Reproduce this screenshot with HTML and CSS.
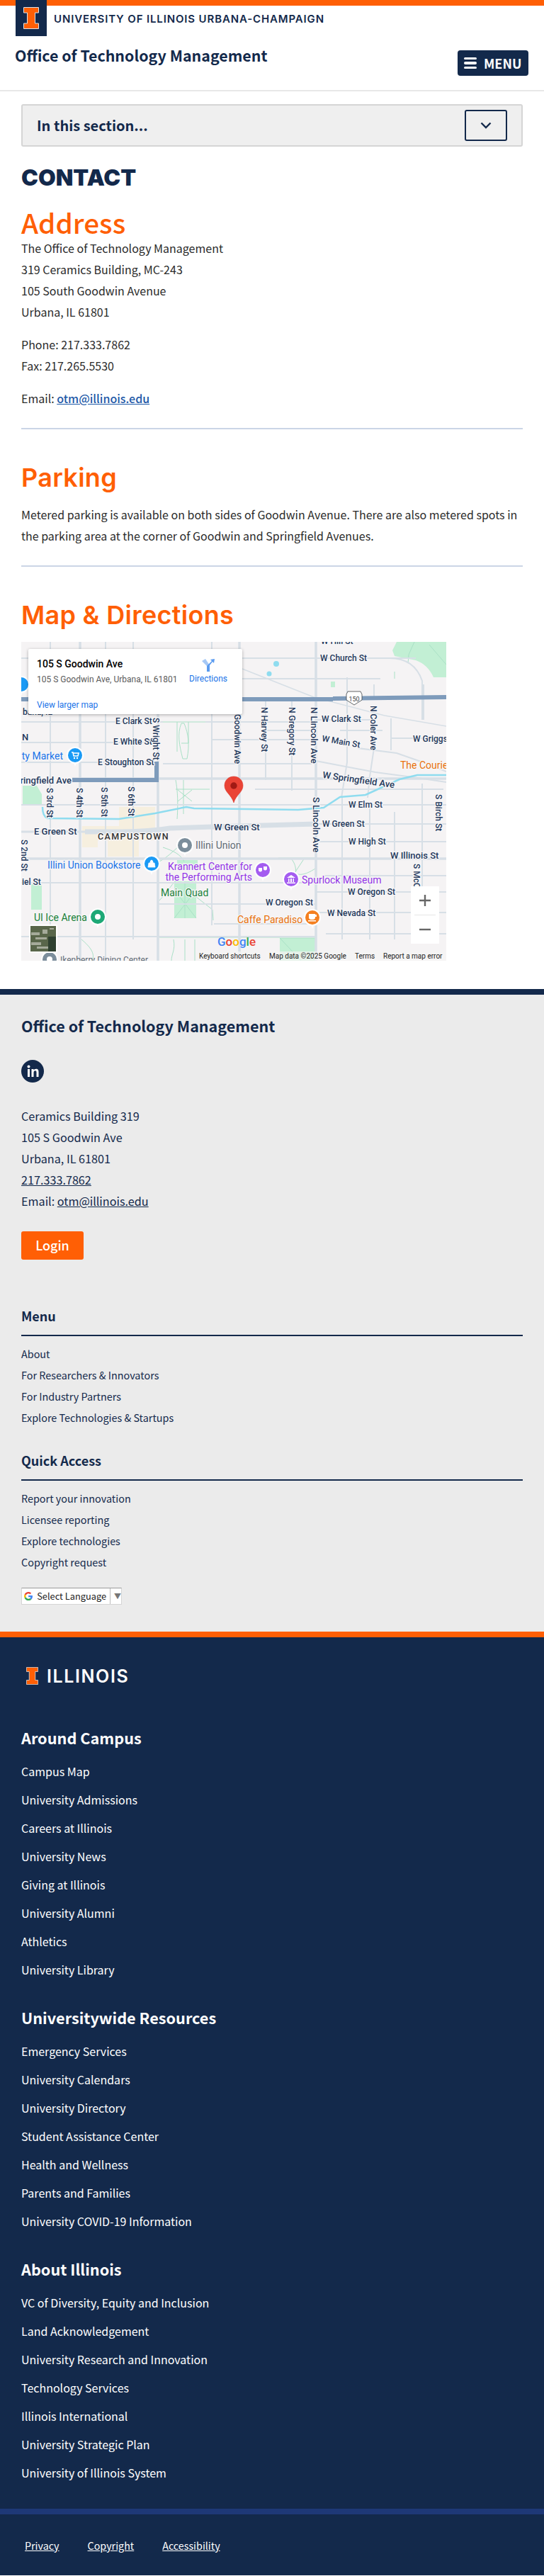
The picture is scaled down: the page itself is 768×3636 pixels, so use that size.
FILE: index.html
```html
<!doctype html>
<html>
<head>
<meta charset="utf-8">
<meta name="viewport" content="width=device-width,initial-scale=1.0">
<title>Contact - Office of Technology Management</title>
<link rel="stylesheet" href="styles.css">
</head>
<body>

<svg class="defs" width="0" height="0">
    <defs>
        <g id="block-i">
            <path d="M.5.5h21v7.5h-5v15h5v7.5H.5V23h5V8h-5z" fill="#ff5f05" stroke="#dfe3e8" stroke-width="1"/>
        </g>
        <g id="poi">
            <path d="M-8-7 0 16 8-7z" fill="#fff"/>
            <circle r="12" fill="#fff"/>
        </g>
    </defs>
</svg>

<header class="site-header">
    <div class="brand-bar">
        <a class="block-i"><svg width="22" height="31" viewBox="0 0 22 31"><use href="#block-i"/></svg></a>
        <span class="wordmark">UNIVERSITY OF ILLINOIS URBANA-CHAMPAIGN</span>
    </div>
    <div class="site-row">
        <a class="site-name">Office of Technology Management</a>
        <button class="menu-btn"><span class="burger"><i></i><i></i><i></i></span>MENU</button>
    </div>
</header>

<main class="content">
    <div class="section-nav">
        <span>In this section...</span>
        <button class="section-toggle">
            <svg width="16" height="10" viewBox="0 0 16 10"><path d="M1.5 1.5 8 8l6.5-6.5" fill="none" stroke="#13294b" stroke-width="2.4"/></svg>
        </button>
    </div>

    <h1 class="page-title">CONTACT</h1>

    <h2 class="h-address">Address</h2>
    <p class="lines">The Office of Technology Management<br>319 Ceramics Building, MC-243<br>105 South Goodwin Avenue<br>Urbana, IL 61801</p>
    <p class="lines">Phone: 217.333.7862<br>Fax: 217.265.5530</p>
    <p class="lines">Email: <a class="mail">otm@illinois.edu</a></p>
    <hr class="rule">

    <h2 class="h-mont">Parking</h2>
    <p class="lines parking">Metered parking is available on both sides of Goodwin Avenue. There are also metered spots in the parking area at the corner of Goodwin and Springfield Avenues.</p>
    <hr class="rule rule-2">

    <h2 class="h-mont">Map &amp; Directions</h2>

    <div class="map">
        <svg class="map-svg" width="600" height="450" viewBox="0 0 600 450">
            <rect width="600" height="450" fill="#f5f3f4"/>

            <!-- green + campus areas -->
            <g fill="#c2efd4">
                <path d="M530 0h70v50h-18q-8-18-25-24l-30-6-3-8z"/>
                <path d="M2 203h20l7 12v14H2z"/>
                <rect x="14" y="342" width="15" height="36"/>
                <rect x="216" y="338" width="31" height="52"/>
                <rect x="220" y="308" width="29" height="14"/>
                <rect x="365" y="418" width="50" height="32"/>
                <rect x="437" y="56" width="6" height="8"/>
            </g>
            <g fill="#f6efdf">
                <rect x="86" y="260" width="103" height="20"/>
                <rect x="138" y="233" width="51" height="27"/>
                <rect x="122" y="280" width="44" height="23"/>
                <rect x="86" y="280" width="22" height="10"/>
            </g>

            <!-- paths -->
            <g fill="none" stroke="#a9e0c6" stroke-width="1">
                <path d="M190 113h77M220 113v42M236 113v30M226 115c-6 15-3 30 2 50h6c4-20 2-35-4-50zM236 143h-10M218 195c2 10 4 30 2 55M229 195v48M218 208h48M221 225l20-16M221 209l20 16"/>
                <path d="M200 290c15 5 25 10 30 20M195 310c10-5 20-15 28-22M195 365c10-10 15-20 25-30M247 360l23 18 1 15M216 350l31 40M216 390l31-40M231 338v52"/>
                <path d="M363 305h52M380 305c10 10 10 25 0 35M400 305l-20 30M415 320c-15 10-25 10-30 5M365 418h50v6M365 418l30 32M195 417h170M215 420c3 15-3 20-3 30M231 420v30M245 420v30M85 420c12 10 20 20 15 30"/>
                <path d="M527 52v-10M555 0l-8 18-1 12M600 32l-24-28"/>
            </g>

            <!-- streets -->
            <g fill="none" stroke="#d7dfe6" stroke-width="2">
                <path d="M41 0v450M119 0v450M158 0v420M269 0v400M345 80v115M382 80v130M453 220v200M492 230v190M527 240v180M566 200v220M460 50v120l-8 50M498 60v20M498 150l-6 40-3 30M522 108v45M568 60v50"/>
                <path d="M0 23h310M312 23h245M312 52h195M0 113h200M260 113h156M416 110h80M345 125h70M450 125h60M0 142h190M270 138h146M522 136h45M0 170h190M200 172h210M0 230h600M0 340h416M425 330h175M193 370h223M0 416h416M272 398h144M416 353h184M416 382h184M430 412h170M416 257h185M416 282h184M416 208h180M570 140h30M330 208h86"/>
                <path d="M416 168l84 16 60 8 40 6M475 150l55 7 40 14 30 12"/>
                <path d="M520 23q35 0 46 32v55"/>
            </g>
            <g fill="none" stroke="#d7dfe6" stroke-width="3.5">
                <path d="M83 0v450M193 100v350M308 0v450M416 0v450M0 306h600M72 193h528"/>
            </g>
            <path d="M90 268c60 0 90 0 120-5l60-2 146-4" fill="none" stroke="#d7dfe6" stroke-width="7"/>
            <path d="M0 268h90" fill="none" stroke="#d7dfe6" stroke-width="3"/>
            <path d="M312 38 413 78l100 26 87 15" fill="none" stroke="#d7dfe6" stroke-width="1.5"/>

            <!-- water -->
            <path d="M30 233c0 8 2 14 7 16l101 1 51-8 44-9 11 2 147 2 36-3 23-15 36-3 48-22 25-6h41" fill="none" stroke="#8fdcef" stroke-width="2.5"/>
            <circle cx="360" cy="31" r="4" fill="#8fdcef"/>
            <circle cx="350" cy="45" r="3.5" fill="#8fdcef"/>

            <!-- highways -->
            <g fill="none" stroke="#7e9bbb">
                <path d="M0 81h440M440 80l160-2" stroke-width="6"/>
                <path d="M72 195h119v-26" stroke-width="6"/>
            </g>
            <path d="M461 70h18l2 4v8l-11 7-11-7v-8z" fill="#fff" stroke="#3c4043" stroke-width=".8"/>
            <text class="shield" x="470" y="84" text-anchor="middle">150</text>

            <!-- street labels -->
            <g class="lb">
                <text x="423" y="3">W Hill St</text>
                <text x="422" y="27">W Church St</text>
                <text x="424" y="113">W Clark St</text>
                <text x="553" y="141">W Griggs</text>
                <text transform="translate(424 140) rotate(10)">W Main St</text>
                <text x="133" y="116">E Clark St</text>
                <text x="130" y="145">E White St</text>
                <text x="108" y="174">E Stoughton St</text>
                <text x="462" y="234">W Elm St</text>
                <text x="425" y="261">W Green St</text>
                <text x="462" y="286">W High St</text>
                <text x="461" y="357">W Oregon St</text>
                <text x="345" y="372">W Oregon St</text>
                <text x="432" y="387">W Nevada St</text>
                <text x="1" y="343">iel St</text>
                <text x="2" y="103">bana, IL</text>
                <text transform="translate(186 107) rotate(90)">S Wright St</text>
                <text transform="translate(301 102) rotate(90)">Goodwin Ave</text>
                <text transform="translate(339 92) rotate(90)">N Harvey St</text>
                <text transform="translate(378 92) rotate(90)">N Gregory St</text>
                <text transform="translate(493 90) rotate(90)">N Coler Ave</text>
                <text transform="translate(36 206) rotate(90)">S 3rd St</text>
                <text transform="translate(78 206) rotate(90)">S 4th St</text>
                <text transform="translate(113 205) rotate(90)">S 5th St</text>
                <text transform="translate(151 204) rotate(90)">S 6th St</text>
                <text transform="translate(585 215) rotate(90)">S Birch St</text>
                <text transform="translate(554 313) rotate(90)">S McC</text>
                <text transform="translate(0 279) rotate(90)">S 2nd St</text>
            </g>
            <g class="lb lb-big">
                <text x="71" y="200" text-anchor="end">ringfield Ave</text>
                <text x="1" y="139">N</text>
                <text transform="translate(409 92) rotate(90)">N Lincoln Ave</text>
                <text transform="translate(412 219) rotate(90)">S Lincoln Ave</text>
                <text transform="translate(425 192) rotate(8)">W Springfield Ave</text>
                <text x="272" y="266">W Green St</text>
                <text x="18" y="272">E Green St</text>
                <text x="521" y="306">W Illinois St</text>
            </g>
            <text class="campus" x="108" y="279">CAMPUSTOWN</text>

            <!-- pois -->
            <g class="poi-lb">
                <text x="59" y="166" text-anchor="end" fill="#1a73e8">ty Market</text>
                <text x="37" y="320" fill="#1a73e8">Illini Union Bookstore</text>
                <text x="246" y="292" fill="#5f6a75">Illini Union</text>
                <text x="326" y="322" text-anchor="end" fill="#9334e6">Krannert Center for</text>
                <text x="326" y="337" text-anchor="end" fill="#9334e6">the Performing Arts</text>
                <text x="396" y="341" fill="#9334e6">Spurlock Museum</text>
                <text x="197" y="359" fill="#188038">Main Quad</text>
                <text x="18" y="394" fill="#188038">UI Ice Arena</text>
                <text x="305" y="397" fill="#e8710a">Caffe Paradiso</text>
                <text x="535" y="179" fill="#e8710a">The Courie</text>
            </g>
            <text class="lb-soft" x="55" y="453">Ikenberry Dining Center</text>

            <g transform="translate(0 60)"><use href="#poi"/><circle r="10" fill="#1a9af5"/></g>
            <g transform="translate(76 160)"><use href="#poi"/><circle r="10" fill="#1a9af5"/><path d="M-5-4h2l1 5h6l1-4H-2" fill="none" stroke="#fff" stroke-width="1.6"/><circle cx="-1" cy="4" r="1.2" fill="#fff"/><circle cx="3" cy="4" r="1.2" fill="#fff"/></g>
            <g transform="translate(231 287)"><use href="#poi"/><circle r="10" fill="#7b8d9b"/><circle r="4" fill="#fff"/></g>
            <g transform="translate(184 313)"><use href="#poi"/><circle r="10" fill="#1a9af5"/><path d="M-4-1h8l1 6h-10zM-2-1q0-4 2-4t2 4" fill="#fff" stroke="#fff" stroke-width=".8"/></g>
            <g transform="translate(341 322)"><use href="#poi"/><circle r="10" fill="#a45cf0"/><path d="M-6-3h5v4q-2.5 3-5 0zM1-5h5v4q-2.5 3-5 0z" fill="#fff"/></g>
            <g transform="translate(381 335)"><use href="#poi"/><circle r="10" fill="#a45cf0"/><path d="M-6-2 0-6l6 4zM-4-1h1.5v5H-4zM-1-1h2v5h-2zM2.500-1H4v5H2.500zM-6 4.500h12V6H-6z" fill="#fff"/></g>
            <g transform="translate(108 388)"><use href="#poi"/><circle r="10" fill="#1da876"/><circle r="4" fill="#fff"/></g>
            <g transform="translate(411 389)"><use href="#poi"/><circle r="10" fill="#f47f20"/><path d="M-5-5H4v6q-1 2-3 2h-3q-2 0-3-2zM4-4h2v3H4zM-6 4H5v1.500H-6z" fill="#fff"/></g>
            <g transform="translate(40 448)"><use href="#poi"/><circle r="10" fill="#7b8d9b"/><circle r="4" fill="#fff"/></g>

            <!-- red pin -->
            <path d="M300 190c-8 0-13 6-13 13 0 9 10 13 13 24 3-11 13-15 13-24 0-7-5-13-13-13z" fill="#ea4335" stroke="#d9352a" stroke-width=".6"/>
            <circle cx="300" cy="203" r="4.700" fill="#a11a14"/>

            <!-- google word -->
            <text class="goog" x="277" y="429"><tspan fill="#4285f4">G</tspan><tspan fill="#ea4335">o</tspan><tspan fill="#fbbc05">o</tspan><tspan fill="#4285f4">g</tspan><tspan fill="#34a853">l</tspan><tspan fill="#ea4335">e</tspan></text>

            <!-- attribution -->
            <rect x="345" y="437" width="255" height="13" fill="#f5f3f4" opacity=".7"/>
            <rect x="247" y="437" width="88" height="13" fill="#f5f3f4" opacity=".7"/>
            <g class="attr">
                <text x="251" y="447">Keyboard shortcuts</text>
                <text x="350" y="447">Map data ©2025 Google</text>
                <text x="471" y="447">Terms</text>
                <text x="511" y="447">Report a map error</text>
            </g>

            <!-- satellite thumb -->
            <rect x="11" y="399" width="40" height="40" rx="2" fill="#fff"/>
            <rect x="13" y="401" width="36" height="36" fill="#59664a"/>
            <g fill="#b9bcae" opacity=".8">
                <rect x="14" y="410" width="12" height="4"/><rect x="20" y="417" width="16" height="3"/><rect x="14" y="424" width="14" height="4"/>
                <rect x="30" y="406" width="7" height="6"/><rect x="22" y="430" width="16" height="3"/><rect x="40" y="404" width="6" height="2"/>
            </g>
            <rect x="38" y="416" width="11" height="21" fill="#2f4030"/>
        </svg>

        <div class="map-card">
            <div class="map-card-info">
                <div class="map-card-title">105 S Goodwin Ave</div>
                <div class="map-card-addr">105 S Goodwin Ave, Urbana, IL 61801</div>
                <a class="map-card-link">View larger map</a>
            </div>
            <a class="map-card-dir">
                <svg width="20" height="20" viewBox="0 0 20 20"><path d="M1 4l7 7v8h4v-9L6 1z" fill="#a6c8f5"/><path d="M8 19v-8l7-7-2-2 6-1-1 6-2-2-4 5v9z" fill="#5a9bf0"/></svg>
                <span>Directions</span>
            </a>
        </div>

        <div class="map-zoom">
            <span class="zoom-btn">
                <svg width="18" height="18" viewBox="0 0 18 18"><path d="M9 1v16M1 9h16" stroke="#666" stroke-width="2.4"/></svg>
            </span>
            <i class="zoom-sep"></i>
            <span class="zoom-btn">
                <svg width="18" height="18" viewBox="0 0 18 18"><path d="M1 9h16" stroke="#666" stroke-width="2.4"/></svg>
            </span>
        </div>
    </div>
</main>

<footer class="unit-footer">
    <div class="unit-name">Office of Technology Management</div>
    <a class="linkedin">
        <svg width="32" height="32" viewBox="0 0 32 32"><circle cx="16" cy="16" r="16" fill="#13294b"/><circle cx="10.5" cy="9.5" r="2" fill="#fff"/><rect x="9" y="13" width="3" height="11" fill="#fff"/><path d="M14.5 13h3v1.600c.8-1.200 2-1.900 3.500-1.900 2.800 0 3.500 1.900 3.500 4.500V24h-3v-6c0-1.600-.3-2.700-1.800-2.700s-2.200 1.100-2.200 2.800V24h-3z" fill="#fff"/></svg>
    </a>
    <p class="unit-lines">Ceramics Building 319<br>105 S Goodwin Ave<br>Urbana, IL 61801<br><a>217.333.7862</a><br>Email: <a>otm@illinois.edu</a></p>
    <a class="login">Login</a>

    <h3 class="foot-head foot-head-first">Menu</h3>
    <ul class="foot-list">
        <li>About</li>
        <li>For Researchers &amp; Innovators</li>
        <li>For Industry Partners</li>
        <li>Explore Technologies &amp; Startups</li>
    </ul>

    <h3 class="foot-head">Quick Access</h3>
    <ul class="foot-list">
        <li>Report your innovation</li>
        <li>Licensee reporting</li>
        <li>Explore technologies</li>
        <li>Copyright request</li>
    </ul>

    <div class="translate">
        <svg width="18" height="18" viewBox="0 0 48 48">
            <path fill="#EA4335" d="M24 9.500c3.540 0 6.710 1.220 9.210 3.600l6.850-6.850C35.900 2.380 30.470 0 24 0 14.620 0 6.510 5.380 2.560 13.220l7.980 6.190C12.430 13.720 17.740 9.500 24 9.500z"/>
            <path fill="#4285F4" d="M46.980 24.550c0-1.570-.15-3.090-.38-4.550H24v9.020h12.940c-.58 2.960-2.260 5.480-4.780 7.180l7.730 6c4.510-4.180 7.090-10.360 7.090-17.650z"/>
            <path fill="#FBBC05" d="M10.530 28.590c-.48-1.450-.76-2.990-.76-4.590s.27-3.140.76-4.590l-7.980-6.190C.92 16.460 0 20.120 0 24c0 3.880.92 7.540 2.560 10.780l7.970-6.190z"/>
            <path fill="#34A853" d="M24 48c6.480 0 11.930-2.130 15.890-5.810l-7.730-6c-2.150 1.450-4.920 2.300-8.160 2.300-6.260 0-11.570-4.220-13.470-9.910l-7.980 6.190C6.510 42.620 14.620 48 24 48z"/>
        </svg>
        <span class="translate-text">Select Language</span>
        <span class="translate-arrow">▼</span>
    </div>
</footer>

<footer class="campus-footer">
    <a class="illinois-logo">
        <svg width="17" height="25" viewBox="0 0 22 31" preserveAspectRatio="none"><use href="#block-i"/></svg>
        <span>ILLINOIS</span>
    </a>

    <h3 class="campus-head campus-head-first">Around Campus</h3>
    <ul class="campus-list">
        <li>Campus Map</li>
        <li>University Admissions</li>
        <li>Careers at Illinois</li>
        <li>University News</li>
        <li>Giving at Illinois</li>
        <li>University Alumni</li>
        <li>Athletics</li>
        <li>University Library</li>
    </ul>

    <h3 class="campus-head">Universitywide Resources</h3>
    <ul class="campus-list">
        <li>Emergency Services</li>
        <li>University Calendars</li>
        <li>University Directory</li>
        <li>Student Assistance Center</li>
        <li>Health and Wellness</li>
        <li>Parents and Families</li>
        <li>University COVID-19 Information</li>
    </ul>

    <h3 class="campus-head">About Illinois</h3>
    <ul class="campus-list">
        <li>VC of Diversity, Equity and Inclusion</li>
        <li>Land Acknowledgement</li>
        <li>University Research and Innovation</li>
        <li>Technology Services</li>
        <li>Illinois International</li>
        <li>University Strategic Plan</li>
        <li>University of Illinois System</li>
    </ul>

    <div class="legal">
        <a>Privacy</a>
        <a>Copyright</a>
        <a>Accessibility</a>
    </div>
</footer>

</body>
</html>
```

FILE: styles.css
```css
*{
    margin: 0;
    padding: 0;
    box-sizing: border-box;
}
body{
    background: #fff;
    color: #2b2b2b;
    font-family: "Noto Sans CJK SC", "Noto Sans", sans-serif;
    font-size: 16px;
    line-height: 30px;
}
.defs{
    position: absolute;
}
ul{
    list-style: none;
}

/* header */
.brand-bar{
    display: flex;
    height: 51px;
    border-top: 8px solid #ff5f05;
    padding-left: 22px;
}
.block-i{
    display: flex;
    justify-content: center;
    width: 44px;
    height: 51px;
    margin-top: -8px;
    padding-top: 10px;
    background: #13294b;
}
.wordmark{
    margin-left: 10px;
    font-family: Inter, sans-serif;
    font-size: 15px;
    font-weight: 600;
    line-height: 37px;
    letter-spacing: .86px;
    color: #13294b;
}
.site-row{
    display: flex;
    justify-content: space-between;
    align-items: flex-start;
    height: 78px;
    padding: 12px 22px 0 21px;
    border-bottom: 2px solid #e8e8e8;
}
.site-name{
    font-size: 21.4px;
    font-weight: 700;
    line-height: 30px;
    color: #13294b;
}
.menu-btn{
    display: flex;
    align-items: center;
    gap: 10px;
    width: 100px;
    height: 36px;
    margin-top: 8px;
    padding-left: 9px;
    border: 0;
    border-radius: 4px;
    background: #13294b;
    color: #fff;
    font-family: inherit;
    font-size: 18px;
    font-weight: 700;
}
.burger{
    display: flex;
    flex-direction: column;
    gap: 3px;
    width: 18px;
}
.burger i{
    height: 3.5px;
    border-radius: 2px;
    background: #fff;
}

/* main */
.content{
    padding: 18px 30px 40px;
}
.section-nav{
    display: flex;
    justify-content: space-between;
    align-items: center;
    height: 60px;
    padding: 0 20px;
    border: 2px solid #d5d5d5;
    border-radius: 3px;
    background: #efefef;
    font-size: 20px;
    font-weight: 700;
    color: #13294b;
}
.section-toggle{
    display: flex;
    justify-content: center;
    align-items: center;
    width: 60px;
    height: 44px;
    border: 2px solid #13294b;
    border-radius: 3px;
    background: transparent;
}
.page-title{
    margin-top: 24px;
    font-family: Inter, sans-serif;
    font-size: 32px;
    font-weight: 900;
    line-height: 40px;
    color: #13294b;
}
.h-address{
    margin-top: 20px;
    font-size: 38.7px;
    font-weight: 500;
    line-height: 44px;
    color: #ff5f05;
}
.h-mont{
    font-family: Inter, sans-serif;
    font-size: 36px;
    font-weight: 600;
    line-height: 44px;
    letter-spacing: .3px;
    color: #ff5f05;
}
.lines{
    margin-bottom: 16px;
}
.mail{
    color: #1d58a7;
    font-weight: 500;
    text-decoration: underline;
}
.rule{
    height: 2px;
    margin: 27px 0 46px;
    border: 0;
    background: #cbd5e6;
}
.parking{
    margin-top: 15px;
    margin-bottom: 0;
}
.rule-2{
    margin-top: 27px;
}

/* map */
.map{
    position: relative;
    width: 600px;
    height: 450px;
    margin-top: 16px;
    overflow: hidden;
}
.map-svg{
    display: block;
}
.map-svg text{
    font-family: Roboto, sans-serif;
}
.lb text{
    font-size: 12px;
    font-weight: 500;
    fill: #24395c;
    paint-order: stroke;
    stroke: #f7f6f7;
    stroke-width: 2.5px;
}
.lb.lb-big text{
    font-size: 13px;
}
.campus{
    font-size: 12.5px;
    font-weight: 500;
    letter-spacing: 1.4px;
    fill: #333;
    paint-order: stroke;
    stroke: #f7f6f7;
    stroke-width: 2.5px;
}
.poi-lb text{
    font-size: 14px;
    paint-order: stroke;
    stroke: #f7f6f7;
    stroke-width: 2.5px;
}
.lb-soft{
    font-size: 12px;
    fill: #5f6a75;
}
.shield{
    font-size: 9px;
    fill: #3c4043;
}
.goog{
    font-size: 17px;
    font-weight: 500;
}
.attr text{
    font-size: 10px;
    fill: #222;
}
.map-card{
    position: absolute;
    left: 10px;
    top: 10px;
    display: flex;
    width: 302px;
    height: 92px;
    padding: 11px 11px 0 12px;
    border-radius: 2px;
    background: #fff;
    box-shadow: 0 1px 4px rgba(0,0,0,.3);
    font-family: Roboto, sans-serif;
    font-size: 12px;
    line-height: 18px;
}
.map-card-info{
    width: 214px;
}
.map-card-title{
    font-size: 14px;
    font-weight: 500;
    line-height: 20px;
    color: #000;
}
.map-card-addr{
    margin-top: 3px;
    color: #5b5b5b;
}
.map-card-link{
    display: block;
    margin-top: 18px;
    color: #1a73e8;
}
.map-card-dir{
    display: flex;
    flex-direction: column;
    align-items: center;
    width: 56px;
    padding-top: 2px;
    color: #1a73e8;
}
.map-zoom{
    position: absolute;
    left: 550px;
    top: 345px;
    display: flex;
    flex-direction: column;
    align-items: center;
    width: 40px;
    height: 81px;
    background: #fff;
}
.zoom-btn{
    display: flex;
    justify-content: center;
    align-items: center;
    height: 40px;
}
.zoom-sep{
    width: 30px;
    height: 1px;
    background: #e6e6e6;
}

/* unit footer */
.unit-footer{
    height: 907px;
    padding: 28px 30px 0;
    border-top: 8px solid #13294b;
    background: #ebebeb;
    color: #13294b;
}
.unit-name{
    font-size: 21.5px;
    font-weight: 700;
    line-height: 32px;
}
.linkedin{
    display: block;
    height: 32px;
    margin-top: 32px;
}
.unit-lines{
    margin-top: 32px;
    font-size: 16.2px;
}
.unit-lines a{
    text-decoration: underline;
}
.login{
    display: block;
    width: 88px;
    height: 40px;
    margin-top: 28px;
    border-radius: 3px;
    background: #ff5f05;
    color: #fff;
    font-size: 18px;
    font-weight: 500;
    line-height: 38px;
    text-align: center;
}
.foot-head{
    margin-top: 30px;
    padding-bottom: 12px;
    border-bottom: 2px solid #13294b;
    font-size: 18px;
    font-weight: 700;
    line-height: 30px;
}
.foot-head-first{
    margin-top: 64px;
}
.foot-list{
    margin-top: 10px;
    font-size: 14.4px;
}
.translate{
    display: flex;
    align-items: center;
    width: 142px;
    height: 24px;
    margin-top: 21px;
    padding-left: 3px;
    border: 1px solid #d5d5d5;
    border-top-color: #9b9b9b;
    background: #fff;
    font-size: 12.8px;
    line-height: 22px;
    color: #222;
    white-space: nowrap;
}
.translate-text{
    margin-left: 6px;
    padding-right: 5px;
    border-right: 1px solid #bbb;
}
.translate-arrow{
    margin-left: 5px;
    font-size: 10px;
    color: #777;
}

/* campus footer */
.campus-footer{
    padding: 42px 30px 0;
    border-top: 8px solid #ff5f05;
    background: #13294b;
    color: #fff;
}
.illinois-logo{
    display: flex;
    align-items: center;
    gap: 12px;
    height: 25px;
    padding-left: 7px;
    font-family: Inter, sans-serif;
    font-size: 25px;
    font-weight: 600;
    letter-spacing: 1.6px;
}
.campus-head{
    margin-top: 32px;
    font-size: 21.7px;
    font-weight: 700;
    line-height: 32px;
}
.campus-head-first{
    margin-top: 59px;
}
.campus-list{
    margin-top: 11px;
    font-size: 16px;
    font-weight: 400;
    line-height: 40px;
}
.legal{
    display: flex;
    gap: 40px;
    margin: 31px -30px 0;
    height: 94px;
    padding: 29px 35px 0;
    border-top: 8px solid #1e3877;
    font-size: 14.3px;
}
.legal a{
    text-decoration: underline;
}
```
